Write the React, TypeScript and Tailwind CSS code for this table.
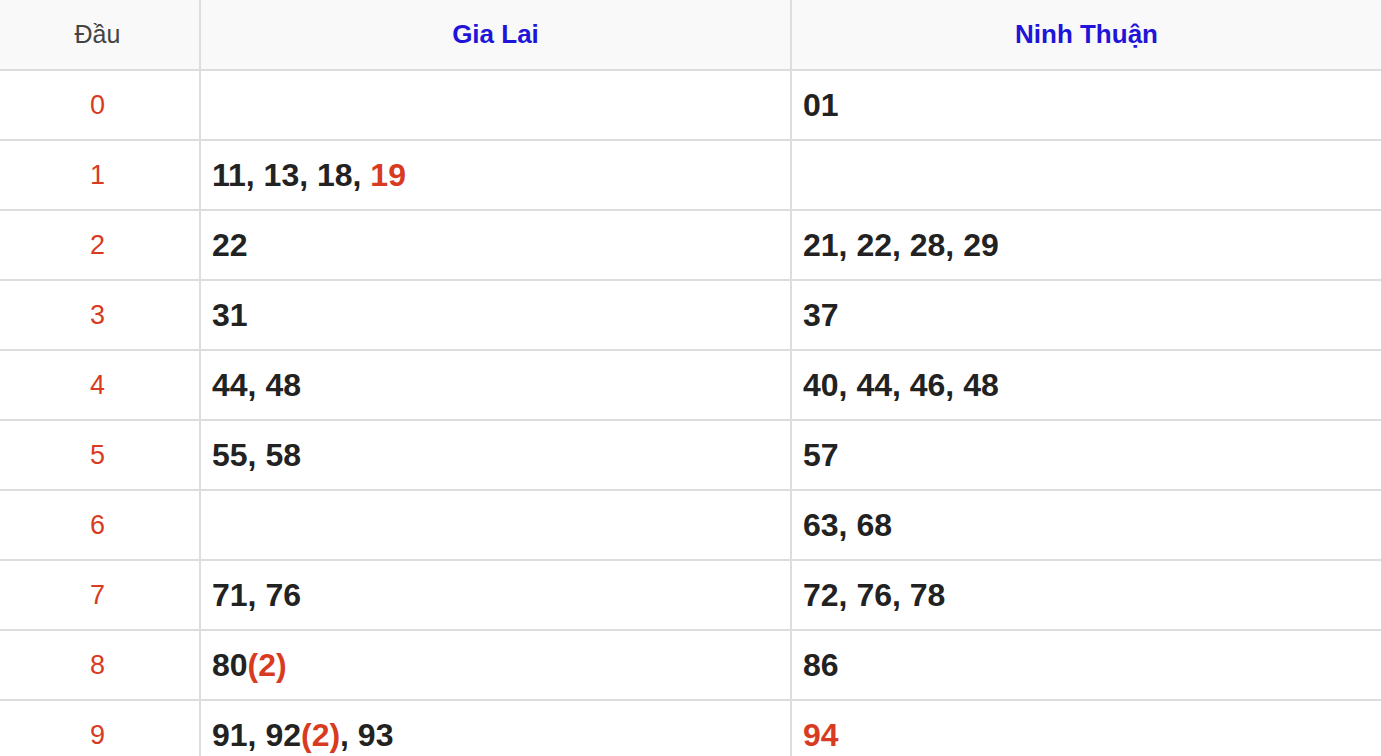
import React from 'react';

type Part = { t: string; red?: boolean };

const rows: { head: string; gl: Part[]; nt: Part[] }[] = [
  { head: '0', gl: [], nt: [{ t: '01' }] },
  { head: '1', gl: [{ t: '11, 13, 18, ' }, { t: '19', red: true }], nt: [] },
  { head: '2', gl: [{ t: '22' }], nt: [{ t: '21, 22, 28, 29' }] },
  { head: '3', gl: [{ t: '31' }], nt: [{ t: '37' }] },
  { head: '4', gl: [{ t: '44, 48' }], nt: [{ t: '40, 44, 46, 48' }] },
  { head: '5', gl: [{ t: '55, 58' }], nt: [{ t: '57' }] },
  { head: '6', gl: [], nt: [{ t: '63, 68' }] },
  { head: '7', gl: [{ t: '71, 76' }], nt: [{ t: '72, 76, 78' }] },
  { head: '8', gl: [{ t: '80' }, { t: '(2)', red: true }], nt: [{ t: '86' }] },
  {
    head: '9',
    gl: [{ t: '91, 92' }, { t: '(2)', red: true }, { t: ', 93' }],
    nt: [{ t: '94', red: true }],
  },
];

function Nums({ parts }: { parts: Part[] }) {
  return (
    <span className="whitespace-pre">
      {parts.map((p, i) => (
        <span key={i} className={p.red ? 'text-[#d83b1f]' : ''}>
          {p.t}
        </span>
      ))}
    </span>
  );
}

export default function App() {
  return (
    <div
      className="w-full bg-white"
      style={{ fontFamily: '"Liberation Sans", Arial, sans-serif' }}
    >
      <div className="grid grid-cols-[201px_591px_1fr] h-[71px] bg-[#f9f9f9] border-b-2 border-[#dddddd]">
        <div className="flex items-center justify-center border-r-2 border-[#dddddd] text-[25px] text-[#444444] pr-1">
          Đầu
        </div>
        <div className="flex items-center justify-center border-r-2 border-[#dddddd] text-[26px] font-bold text-[#1f14d8]">
          Gia Lai
        </div>
        <div className="flex items-center justify-center text-[26px] font-bold text-[#1f14d8]">
          Ninh Thuận
        </div>
      </div>
      {rows.map((r) => (
        <div
          key={r.head}
          className="grid grid-cols-[201px_591px_1fr] h-[70px] border-b-2 border-[#dddddd]"
        >
          <div className="flex items-center justify-center border-r-2 border-[#dddddd] text-[27px] text-[#d83b1f] pr-1">
            {r.head}
          </div>
          <div className="flex items-center pl-[11px] border-r-2 border-[#dddddd] text-[32px] font-bold text-[#222222]">
            <Nums parts={r.gl} />
          </div>
          <div className="flex items-center pl-[11px] text-[32px] font-bold text-[#222222]">
            <Nums parts={r.nt} />
          </div>
        </div>
      ))}
    </div>
  );
}
